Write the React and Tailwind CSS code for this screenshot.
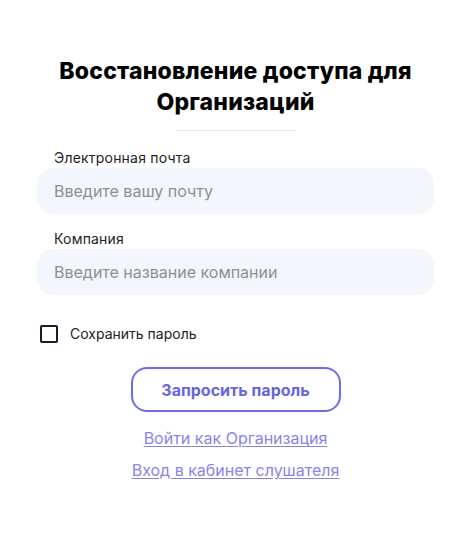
export default function App() {
  return (
    <div className="w-[474px] h-[535px] bg-white" style={{ fontFamily: 'Inter, "Noto Sans", sans-serif' }}>
      <div className="pt-[56px] pl-[37px] w-[434px] flex flex-col">
        <h1 className="text-center text-[23px] font-extrabold leading-[31px] text-black tracking-[0.2px]">
          Восстановление доступа для
          <br />
          Организаций
        </h1>
        <div className="mx-auto mt-[12px] w-[120px] h-px bg-[#e6e6e6]" />

        <label className="mt-[18px] ml-[17px] text-[14px] leading-[18px] text-[#222] tracking-[0.2px]">Электронная почта</label>
        <div className="mt-[1px] h-[46px] rounded-[16px] bg-[#f3f6fa] flex items-center px-[17px] text-[16px] text-[#8c9099]">
          Введите вашу почту
        </div>

        <label className="mt-[16px] ml-[17px] text-[14px] leading-[18px] text-[#222] tracking-[0.2px]">Компания</label>
        <div className="mt-[1px] h-[46px] rounded-[16px] bg-[#f3f6fa] flex items-center px-[17px] text-[16px] text-[#8c9099]">
          Введите название компании
        </div>

        <div className="mt-[28px] ml-[3px] flex items-center gap-[12px]">
          <div className="w-[18px] h-[18px] border-2 border-[#1b1b2f] rounded-[2px]" />
          <span className="text-[14px] text-[#222]">Сохранить пароль</span>
        </div>

        <button className="mx-auto mt-[23px] w-[210px] h-[45px] rounded-[16px] border-2 border-[#6e6ce6] text-[16px] font-bold text-[#6865df]">
          Запросить пароль
        </button>

        <a className="mx-auto mt-[14px] text-[16px] text-[#8a84ea] underline underline-offset-2">Войти как Организация</a>
        <a className="mx-auto mt-[8px] text-[16px] text-[#8a84ea] underline underline-offset-2">Вход в кабинет слушателя</a>
      </div>
    </div>
  );
}
